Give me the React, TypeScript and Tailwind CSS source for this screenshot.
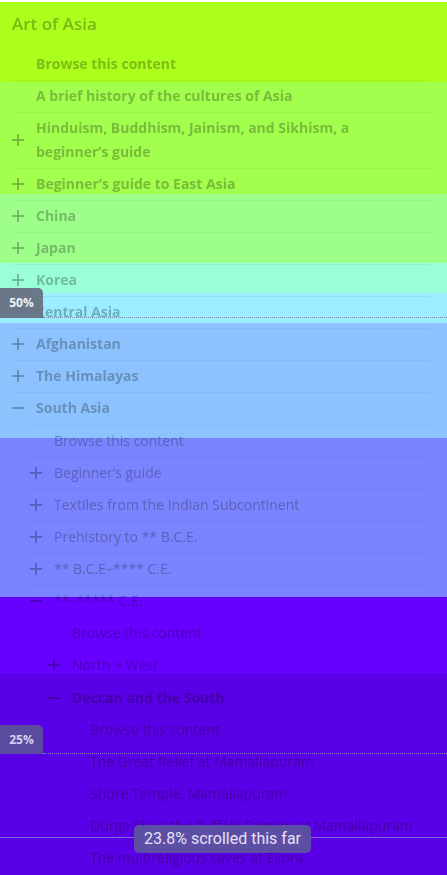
import React from 'react';

type Row = {
  label: string;
  level: number;
  icon?: 'plus' | 'minus';
  bold?: boolean;
  gap?: boolean;
};

const rows: Row[] = [
  { label: 'Browse this content', level: 0, bold: true },
  { label: 'A brief history of the cultures of Asia', level: 0, bold: true },
  { label: 'Hinduism, Buddhism, Jainism, and Sikhism, a beginner\u2019s guide', level: 0, icon: 'plus', bold: true },
  { label: 'Beginner\u2019s guide to East Asia', level: 0, icon: 'plus', bold: true },
  { label: 'China', level: 0, icon: 'plus', bold: true },
  { label: 'Japan', level: 0, icon: 'plus', bold: true },
  { label: 'Korea', level: 0, icon: 'plus', bold: true },
  { label: 'Central Asia', level: 0, icon: 'plus', bold: true },
  { label: 'Afghanistan', level: 0, icon: 'plus', bold: true },
  { label: 'The Himalayas', level: 0, icon: 'plus', bold: true },
  { label: 'South Asia', level: 0, icon: 'minus', bold: true },
  { label: 'Browse this content', level: 1, gap: true },
  { label: 'Beginner\u2019s guide', level: 1, icon: 'plus' },
  { label: 'Textiles from the Indian Subcontinent', level: 1, icon: 'plus' },
  { label: 'Prehistory to ** B.C.E.', level: 1, icon: 'plus' },
  { label: '** B.C.E\u2013**** C.E.', level: 1, icon: 'plus' },
  { label: '**\u2013***** C.E.', level: 1, icon: 'minus' },
  { label: 'Browse this content', level: 2 },
  { label: 'North + West', level: 2, icon: 'plus' },
  { label: 'Deccan and the South', level: 2, icon: 'minus', bold: true, gap: true },
  { label: 'Browse this content', level: 3 },
  { label: 'The Great Relief at Mamallapuram', level: 3 },
  { label: 'Shore Temple, Mamallapuram', level: 3 },
  { label: 'Durga Slays the Buffalo Demon at Mamallapuram', level: 3 },
  { label: 'The multireligious caves at Ellora', level: 3 },
];

const indents = ['pl-0', 'pl-[18px]', 'pl-[36px]', 'pl-[54px]'];

// scroll-map bands, top to bottom
const bands = [
  { h: 'h-[2px]', bg: 'bg-white' },
  { h: 'h-[80px]', bg: 'bg-[#acff1c]' },
  { h: 'h-[112px]', bg: 'bg-[#a3ff4d]' },
  { h: 'h-[69px]', bg: 'bg-[#9dff8a]' },
  { h: 'h-[30px]', bg: 'bg-[#9affd9]' },
  { h: 'h-[30px]', bg: 'bg-[#9aeeff]' },
  { h: 'h-[115px]', bg: 'bg-[#8cc3ff]' },
  { h: 'h-[159px]', bg: 'bg-[#7b84ff]' },
  { h: 'h-[76px]', bg: 'bg-[#6600ff]' },
  { h: 'h-[202px]', bg: 'bg-[#5a00e6]' },
];

const Icon = ({ kind }: { kind?: 'plus' | 'minus' }) => (
  <span className="w-[24px] shrink-0 flex items-center">
    {kind && (
      <svg width="12" height="12" viewBox="0 0 12 12" fill="none" stroke="#b4b4b4" strokeWidth="1.8">
        <path d="M0 6h12" />
        {kind === 'plus' && <path d="M6 0v12" />}
      </svg>
    )}
  </span>
);

export default function App() {
  return (
    <div className="relative w-[447px] h-[875px] overflow-hidden bg-white" style={{ fontFamily: '"Open Sans", "Noto Sans", sans-serif' }}>
      <div className="pl-[12px] pr-[17px]">
        <div className="h-[48px] pt-[11px]">
          <h1 className="text-[17px] leading-[26px] font-semibold text-[#b8b8b8]">Art of Asia</h1>
        </div>
        {rows.map((row, i) => (
          <div key={i} className={`${indents[row.level]} ${row.gap ? 'pt-[1px]' : ''}`}>
            <div className={`flex items-center min-h-[32px] pb-[4px] ${i > 0 ? 'pt-[3px] border-t border-[#f2f2f2]' : 'pt-[4px]'}`}>
              <Icon kind={row.icon} />
              <span className={`pr-[12px] text-[14px] leading-[24px] text-[#bcbcbc] ${row.bold ? 'font-bold' : 'font-normal'}`}>
                {row.label}
              </span>
            </div>
          </div>
        ))}
      </div>

      {/* heat overlay */}
      <div className="absolute inset-0 pointer-events-none mix-blend-multiply flex flex-col">
        {bands.map((b, i) => (
          <div key={i} className={`${b.h} ${b.bg} shrink-0`} />
        ))}
      </div>

      {/* 50% marker */}
      <div className="absolute left-0 top-[288px] w-[43px] h-[30px] bg-[#6a7789] rounded-tr-[5px] flex items-center justify-center text-[12px] font-bold text-[#eef2f6]">
        50%
      </div>
      <div className="absolute left-[43px] right-0 top-[317px] border-t border-dotted border-[#7a8896]" />

      {/* 25% marker */}
      <div className="absolute left-0 top-[725px] w-[43px] h-[29px] bg-[#5b4b9f] rounded-tr-[5px] flex items-center justify-center text-[12px] font-bold text-[#d6cff2]">
        25%
      </div>
      <div className="absolute left-[43px] right-0 top-[753px] border-t border-dotted border-[#8a7ad0]" />

      {/* scroll line + tooltip */}
      <div className="absolute left-0 right-0 top-[837px] border-t border-[#8268d8]" />
      <div
        className="absolute left-[134px] top-[825px] h-[28px] px-[10px] rounded-[5px] bg-[#5c4fa3] flex items-center text-[16px] text-[#e6e0fa]"
        style={{ fontFamily: 'Roboto, "Noto Sans", sans-serif' }}
      >
        23.8% scrolled this far
      </div>
    </div>
  );
}
